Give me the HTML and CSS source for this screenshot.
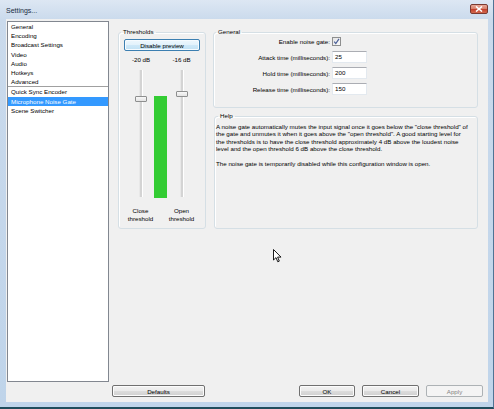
FILE: index.html
```html
<!DOCTYPE html>
<html>
<head>
<meta charset="utf-8">
<title>Settings...</title>
<link rel="stylesheet" href="styles.css">
</head>
<body>
<div class="window">
  <div class="titlebar">
    <span class="title">Settings...</span>
    <span class="close">
      <svg width="8" height="6" viewBox="0 0 8 6"><path d="M1 0.5 L7 5.5 M7 0.5 L1 5.5" stroke="#fff" stroke-width="1.6"/></svg>
    </span>
  </div>
  <div class="client">
    <div class="main">
      <div class="list">
        <div class="item">General</div>
        <div class="item">Encoding</div>
        <div class="item">Broadcast Settings</div>
        <div class="item">Video</div>
        <div class="item">Audio</div>
        <div class="item">Hotkeys</div>
        <div class="item">Advanced</div>
        <div class="sep"></div>
        <div class="item">Quick Sync Encoder</div>
        <div class="item selected">Microphone Noise Gate</div>
        <div class="item">Scene Switcher</div>
      </div>
      <div class="panel">
        <fieldset class="group thresholds">
          <legend>Thresholds</legend>
          <button class="btn default">Disable preview</button>
          <div class="meters">
            <div class="db">-20 dB</div>
            <div></div>
            <div class="db">-16 dB</div>
            <div class="slider"><div class="track"></div><div class="thumb close-thumb"></div></div>
            <div class="barcell"><div class="bar"></div></div>
            <div class="slider"><div class="track"></div><div class="thumb open-thumb"></div></div>
            <div class="caption"><span>Close<br>threshold</span></div>
            <div></div>
            <div class="caption"><span>Open<br>threshold</span></div>
          </div>
        </fieldset>
        <div class="rightcol">
          <fieldset class="group general">
            <legend>General</legend>
            <div class="form">
              <label class="lbl">Enable noise gate:</label>
              <div class="ctl"><span class="check"><svg width="7" height="7" viewBox="0 0 7 7"><path d="M1.2 3.6 L2.8 5.6 L6 0.8" fill="none" stroke="#4a5f97" stroke-width="1.2"/></svg></span></div>
              <label class="lbl">Attack time (milliseconds):</label>
              <div class="ctl"><span class="input">25</span></div>
              <label class="lbl">Hold time (milliseconds):</label>
              <div class="ctl"><span class="input">200</span></div>
              <label class="lbl">Release time (milliseconds):</label>
              <div class="ctl"><span class="input">150</span></div>
            </div>
          </fieldset>
          <fieldset class="group help">
            <legend>Help</legend>
            <p class="helptext">A noise gate automatically mutes the input signal once it goes below the "close threshold" of<br>the gate and unmutes it when it goes above the "open threshold". A good starting level for<br>the thresholds is to have the close threshold approximately 4 dB above the loudest noise<br>level and the open threshold 6 dB above the close threshold.</p>
            <p class="helptext">The noise gate is temporarily disabled while this configuration window is open.</p>
          </fieldset>
        </div>
      </div>
    </div>
    <div class="buttons">
      <button class="btn defaults">Defaults</button>
      <div class="spacer"></div>
      <button class="btn ok">OK</button>
      <button class="btn cancel">Cancel</button>
      <button class="btn apply" disabled>Apply</button>
    </div>
  </div>
  <svg class="cursor" width="9" height="14" viewBox="0 0 9 14"><path d="M0.5 0.5 L0.5 11 L3 8.6 L4.8 12.8 L6.3 12.1 L4.6 8.1 L8 8.1 Z" fill="#fff" stroke="#000" stroke-width="0.9" stroke-linejoin="round"/></svg>
</div>
</body>
</html>
```

FILE: styles.css
```css
html, body {
  margin: 0;
  padding: 0;
  width: 494px;
  height: 409px;
  overflow: hidden;
}

body {
  font-family: "Liberation Sans", Arial, sans-serif;
  font-size: 6.2px;
  color: #000;
}

.window {
  position: relative;
  width: 494px;
  height: 409px;
  box-sizing: border-box;
  display: flex;
  flex-direction: column;
  background: linear-gradient(to bottom, #dde7f3 0px, #cadaec 20px, #bfd4ea 100%);
  border-right: 1px solid #4f7394;
  border-bottom: 2px solid #1f4c5c;
}

.titlebar {
  height: 19px;
  display: flex;
  align-items: center;
  padding: 0 5px 0 6px;
  box-sizing: border-box;
}

.title {
  flex: 1;
  font-size: 7px;
  color: #1b2c3f;
  padding-top: 1px;
}

.close {
  width: 18px;
  height: 10px;
  box-sizing: border-box;
  border: 1px solid #7a3a30;
  border-radius: 2px;
  background: linear-gradient(to bottom, #e8a897 0%, #d9826d 45%, #c4412c 55%, #d2684e 100%);
  display: flex;
  align-items: center;
  justify-content: center;
  margin-top: -2px;
}

.client {
  margin: 0 5px 5px 6px;
  height: 383px;
  background: #f0f0f0;
  display: flex;
  flex-direction: column;
}

.main {
  display: flex;
  padding-top: 2px;
  height: 363px;
  box-sizing: border-box;
}

.list {
  margin-left: 1px;
  width: 102px;
  height: 361px;
  box-sizing: border-box;
  background: #fff;
  border: 1px solid #828790;
}

.item {
  height: 9.2px;
  line-height: 9.2px;
  padding-left: 3px;
  white-space: nowrap;
}

.item.selected {
  background: #3399ff;
  color: #fff;
}

.sep {
  height: 1px;
  background: #a0a0a0;
}

.panel {
  display: flex;
  align-items: stretch;
  margin-left: 9px;
  margin-top: 7px;
  align-self: flex-start;
}

.group {
  margin: 0;
  padding: 0;
  border: 1px solid #d5dfe5;
  border-radius: 3px;
  box-shadow: inset 1px 1px 0 #fff;
  min-width: 0;
}

.group legend {
  padding: 0 2px;
  margin-left: 2px;
  line-height: 8px;
  font-size: 6.2px;
  color: #000;
}

.thresholds {
  width: 88px;
  box-sizing: border-box;
  padding-bottom: 5px;
}

.btn {
  font-family: "Liberation Sans", Arial, sans-serif;
  font-size: 6.2px;
  color: #000;
  height: 12px;
  box-sizing: border-box;
  padding: 0;
  border: 1px solid #707070;
  border-radius: 2px;
  background: linear-gradient(to bottom, #f2f2f2 0%, #ebebeb 50%, #dddddd 50%, #cfcfcf 100%);
  box-shadow: inset 0 0 0 1px #fcfcfc;
  line-height: 9px;
}

.btn.default {
  display: block;
  width: 76px;
  margin: 3px 0 0 5px;
  border-color: #3c7fb1;
  background: linear-gradient(to bottom, #eef7fd 0%, #e2f2fc 50%, #cfe9f9 50%, #c1e1f4 100%);
  box-shadow: inset 0 0 0 1px #f6fbff;
}

.meters {
  display: grid;
  grid-template-columns: 27px 13px 29px;
  grid-template-rows: 8px 134px auto;
  margin: 5px 0 0 8px;
}

.db {
  text-align: center;
  line-height: 8px;
  white-space: nowrap;
}

.meters .db:first-child {
  padding-left: 1px;
}

.slider {
  position: relative;
  margin-top: 6px;
  height: 127px;
}

.track {
  width: 2px;
  height: 100%;
  margin: 0 auto;
  background: #d4d4d4;
  border-right: 1px solid #fff;
  border-left: 1px solid #e8e8e8;
}

.thumb {
  position: absolute;
  left: 50%;
  margin-left: -6px;
  width: 12px;
  height: 6px;
  box-sizing: border-box;
  border: 1px solid #8e8f8f;
  border-radius: 1px;
  background: linear-gradient(to bottom, #f8f8f8 0%, #e4e4e4 100%);
}

.close-thumb { top: 26px; }
.open-thumb { top: 21px; }

.barcell {
  display: flex;
  align-items: flex-end;
}

.bar {
  width: 13px;
  height: 102px;
  background: #33cc33;
}

.caption {
  display: flex;
  justify-content: center;
  line-height: 8px;
  text-align: center;
  white-space: nowrap;
  margin-top: 9px;
}

.rightcol {
  display: flex;
  flex-direction: column;
  margin-left: 7px;
  width: 265px;
}

.general {
  padding-bottom: 12px;
}

.form {
  display: grid;
  grid-template-columns: 116px auto;
  grid-template-rows: 11px 12px 12px 12px;
  column-gap: 2px;
  row-gap: 4px;
}

.lbl {
  text-align: right;
  white-space: nowrap;
  display: flex;
  align-items: center;
  justify-content: flex-end;
}

.ctl {
  display: flex;
  align-items: center;
}

.check {
  width: 9px;
  height: 9px;
  box-sizing: border-box;
  border: 1px solid #8e8f8f;
  background: linear-gradient(to bottom right, #e4e4e4, #fafafa);
  display: flex;
  align-items: center;
  justify-content: center;
}

.input {
  width: 35px;
  height: 12px;
  box-sizing: border-box;
  border: 1px solid #e3e9ef;
  border-top-color: #abadb3;
  background: #fff;
  padding-left: 2px;
  line-height: 10px;
}

.help {
  flex: 1;
  margin-top: 4px;
  margin-left: 1px;
  padding: 3px 2px 0 1px;
}

.helptext {
  margin: 0 0 7.4px 0;
  line-height: 7.4px;
  white-space: nowrap;
}

.buttons {
  display: flex;
  margin-top: 3px;
  padding-left: 106px;
  padding-right: 5px;
}

.spacer { flex: 1; }

.defaults { width: 93px; }
.ok { width: 56px; }
.cancel { width: 57px; margin-left: 7px; }
.apply { width: 57px; margin-left: 7px; }

.btn.apply {
  color: #838383;
  border-color: #adb2b5;
  background: #f4f4f4;
  box-shadow: none;
}

.cursor {
  position: absolute;
  left: 273px;
  top: 249px;
}
```
